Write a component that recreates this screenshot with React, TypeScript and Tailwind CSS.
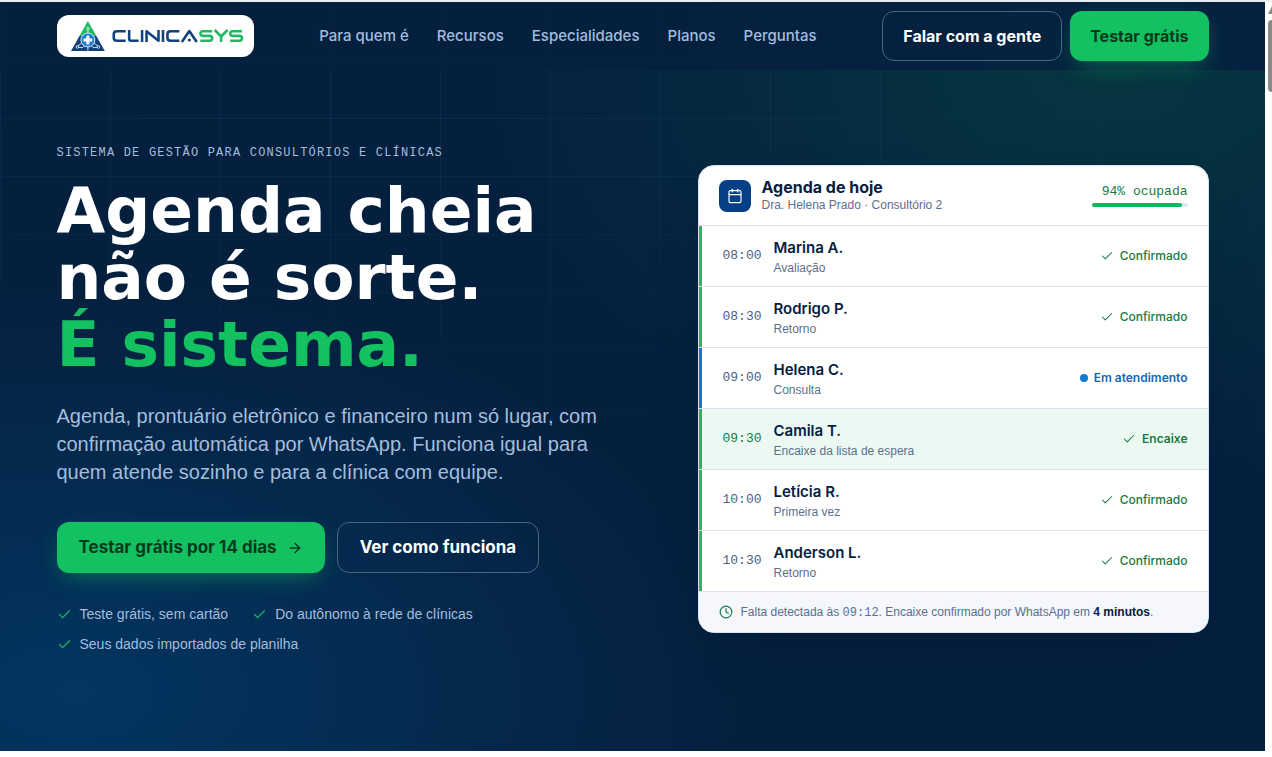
import React from 'react';
import { ArrowRight, Calendar, Check, Clock } from 'lucide-react';

const navLinks = ['Para quem é', 'Recursos', 'Especialidades', 'Planos', 'Perguntas'];

const benefits = [
  'Teste grátis, sem cartão',
  'Do autônomo à rede de clínicas',
  'Seus dados importados de planilha',
];

type Status = 'confirmado' | 'atendimento' | 'encaixe';

interface Appointment {
  time: string;
  name: string;
  kind: string;
  status: Status;
}

const appointments: Appointment[] = [
  { time: '08:00', name: 'Marina A.', kind: 'Avaliação', status: 'confirmado' },
  { time: '08:30', name: 'Rodrigo P.', kind: 'Retorno', status: 'confirmado' },
  { time: '09:00', name: 'Helena C.', kind: 'Consulta', status: 'atendimento' },
  { time: '09:30', name: 'Camila T.', kind: 'Encaixe da lista de espera', status: 'encaixe' },
  { time: '10:00', name: 'Letícia R.', kind: 'Primeira vez', status: 'confirmado' },
  { time: '10:30', name: 'Anderson L.', kind: 'Retorno', status: 'confirmado' },
];

const statusStyles: Record<
  Status,
  { label: string; text: string; bar: string; row: string; time: string }
> = {
  confirmado: {
    label: 'Confirmado',
    text: 'text-[#167a43] font-medium',
    bar: 'bg-[#22b866]',
    row: 'bg-white',
    time: 'text-[#4b6180]',
  },
  atendimento: {
    label: 'Em atendimento',
    text: 'text-[#1467b3] font-semibold',
    bar: 'bg-[#0a7bd0]',
    row: 'bg-white',
    time: 'text-[#4b6180]',
  },
  encaixe: {
    label: 'Encaixe',
    text: 'text-[#167a43] font-semibold',
    bar: 'bg-[#22b866]',
    row: 'bg-[#ecf9f2]',
    time: 'text-[#167a43]',
  },
};

function Logo() {
  return (
    <a
      href="#"
      aria-label="Clinicasys"
      className="flex h-[42px] w-[197px] shrink-0 items-center rounded-xl bg-white pl-3.5"
    >
      <svg width="173" height="30" viewBox="0 0 174 30" fill="none" aria-hidden="true">
        <path d="M17 0 25.500 15H8.500z" fill="#1fba62" />
        <path d="M8.500 15h17L34 30H0z" fill="#12427c" />
        <g stroke="#fff" strokeWidth="0.800">
          <path d="M17 9v4M17 25v5M11 22l-4 3M23 22l4 3M8 26.500h4l2-2M26 26.500h-4l-2-2" />
          <circle cx="17" cy="7.500" r="1.300" />
          <circle cx="6.500" cy="26" r="1.300" />
          <circle cx="27.500" cy="26" r="1.300" />
        </g>
        <circle cx="17" cy="19" r="7" fill="#1b7fd0" stroke="#dcebfa" strokeWidth="1" />
        <path d="M15.500 14.500h3v3h3v3h-3v3h-3v-3h-3v-3h3z" fill="#fff" />
        {/* Wordmark */}
        <g strokeWidth="2.600" strokeLinejoin="round">
          <g stroke="#12427c">
            <path d="M55 10.300H46q-3 0-3 3v3.400q0 3 3 3h9" />
            <path d="M58.500 9v8.700q0 2 2 2H68" />
            <path d="M71.500 9v12" />
            <path d="M76 21V10.300L88 19.700V9" />
            <path d="M92.500 9v12" />
            <path d="M109 10.300h-9q-3 0-3 3v3.400q0 3 3 3h9" />
            <path d="M111.500 21 119 10l7.500 11" />
          </g>
          <circle cx="119" cy="19" r="1.600" fill="#12427c" />
          <g stroke="#1fba62">
            <path d="M142 10.300h-9.500q-2.300 0-2.300 2.300t2.300 2.300h7q2.500 0 2.500 2.400t-2.500 2.400H130" />
            <path d="m144.500 9 6.500 6.500L157.500 9M151 15.500V21" />
            <path d="M172 10.300h-9.500q-2.300 0-2.300 2.300t2.300 2.300h7q2.500 0 2.500 2.400t-2.500 2.400H160" />
          </g>
        </g>
      </svg>
    </a>
  );
}

function Header() {
  return (
    <header className="relative z-10 bg-[#05203f]/90">
      <div className="mx-auto flex h-[68px] max-w-6xl items-center justify-between">
        <Logo />
        <nav className="flex gap-7 text-[15px] font-medium text-[#a3bddd]">
          {navLinks.map((link) => (
            <a key={link} href="#">
              {link}
            </a>
          ))}
        </nav>
        <div className="flex gap-2 text-base font-bold">
          <button className="h-[50px] rounded-xl border border-[#496581] px-5 text-white">
            Falar com a gente
          </button>
          <button className="h-[50px] rounded-xl bg-[#13c161] px-5 text-[#053a1c] shadow-[0_8px_24px_-8px_rgba(19,193,97,0.6)]">
            Testar grátis
          </button>
        </div>
      </div>
    </header>
  );
}

function StatusLabel({ status }: { status: Status }) {
  const style = statusStyles[status];
  return (
    <span className={`flex items-center gap-1.5 font-['Inter'] text-xs ${style.text}`}>
      {status === 'atendimento' ? (
        <span className="size-2 rounded-full bg-[#0a7bd0]" />
      ) : (
        <Check size={14} strokeWidth={1.75} />
      )}
      {style.label}
    </span>
  );
}

function AgendaCard() {
  return (
    <section className="overflow-hidden rounded-2xl border border-[#d9e3ee] bg-white font-['Liberation_Sans'] text-[#5b708c] shadow-[0_24px_60px_-20px_rgba(0,10,30,0.2)]">
      <div className="flex h-[59px] items-center gap-[11px] px-5">
        <div className="flex size-8 items-center justify-center rounded-lg bg-[#053f85] text-white">
          <Calendar size={16} strokeWidth={1.75} />
        </div>
        <div className="flex-1">
          <h2 className="font-['Inter'] text-base leading-[18px] font-bold text-[#05203f]">
            Agenda de hoje
          </h2>
          <p className="text-xs leading-[18px]">Dra. Helena Prado · Consultório 2</p>
        </div>
        <div className="flex w-24 flex-col gap-0.5 pb-0.5">
          <span className="text-right font-['Liberation_Mono'] text-[13px] leading-[18px] whitespace-nowrap text-[#167a43]">
            94% ocupada
          </span>
          <div className="h-1 rounded-full bg-[#dde6ee]">
            <div className="h-1 w-[94%] rounded-full bg-[#13b65e]" />
          </div>
        </div>
      </div>
      <ul>
        {appointments.map((item) => (
          <li
            key={item.time}
            className={`flex h-[61px] items-center border-t border-[#d9e3ee] pr-5 ${statusStyles[item.status].row}`}
          >
            <span className={`mr-[21px] w-[3px] self-stretch ${statusStyles[item.status].bar}`} />
            <time
              className={`w-[51px] font-['Liberation_Mono'] text-[13px] ${statusStyles[item.status].time}`}
            >
              {item.time}
            </time>
            <div className="flex-1 pt-1">
              <p className="font-['Inter'] text-[15px] leading-5 font-semibold text-[#05203f]">
                {item.name}
              </p>
              <p className="text-xs leading-5">{item.kind}</p>
            </div>
            <StatusLabel status={item.status} />
          </li>
        ))}
      </ul>
      <div className="flex h-[41px] items-center gap-2 border-t border-[#d9e3ee] bg-[#f5f7fc] px-5 text-xs">
        <Clock size={14} className="text-[#167a43]" />
        <p>
          Falta detectada às <span className="font-['Liberation_Mono']">09:12</span>. Encaixe
          confirmado por WhatsApp em <strong className="text-[#05203f]">4 minutos</strong>.
        </p>
      </div>
    </section>
  );
}

function Hero() {
  return (
    <main className="mx-auto grid max-w-6xl grid-cols-[1fr_511px] items-center gap-16 pt-[75px] pb-[98px]">
      <div>
        <p className="font-['Liberation_Mono'] text-xs leading-4 font-medium tracking-widest text-[#a3bddd]">
          SISTEMA DE GESTÃO PARA CONSULTÓRIOS E CLÍNICAS
        </p>
        <h1 className="mt-4 font-['DejaVu_Sans'] text-[63px] leading-[67px] font-bold text-white">
          Agenda cheia
          <br />
          não é sorte.
          <br />
          <span className="text-[#13c161]">É sistema.</span>
        </h1>
        <p className="mt-6 font-['Liberation_Sans'] text-xl leading-7 text-[#a3bddd]">
          Agenda, prontuário eletrônico e financeiro num só lugar, com confirmação automática por
          WhatsApp. Funciona igual para quem atende sozinho e para a clínica com equipe.
        </p>
        <div className="mt-9 flex gap-3 text-[17px] font-bold">
          <button className="flex h-[51px] items-center gap-2.5 rounded-xl bg-[#13c161] px-[22px] text-[#053a1c] shadow-[0_8px_24px_-8px_rgba(19,193,97,0.6)]">
            Testar grátis por 14 dias
            <ArrowRight size={16} />
          </button>
          <button className="h-[51px] rounded-xl border border-[#496581] px-[22px] text-white">
            Ver como funciona
          </button>
        </div>
        <ul className="mt-8 flex flex-wrap gap-x-6 gap-y-3 font-['Liberation_Sans'] text-sm leading-[18px] text-[#a3bddd]">
          {benefits.map((benefit) => (
            <li key={benefit} className="flex items-center gap-2">
              <Check size={15} strokeWidth={1.75} className="text-[#13c161]" />
              {benefit}
            </li>
          ))}
        </ul>
      </div>
      <AgendaCard />
    </main>
  );
}

export default function App() {
  return (
    <div className="flex items-start border-t-2 border-[#e8eef0] bg-white font-['Inter',sans-serif]">
      <div className="relative min-w-0 flex-1 bg-[#05203f] bg-[radial-gradient(620px_420px_at_88%_8%,rgba(6,85,66,0.42),transparent),radial-gradient(660px_400px_at_6%_92%,rgba(0,75,130,0.5),transparent)]">
        {/* Faint calendar grid, fading out downwards and to the right */}
        <div className="absolute inset-0 bg-[linear-gradient(to_right,rgba(150,190,230,0.07)_1px,transparent_1px),linear-gradient(to_bottom,rgba(150,190,230,0.07)_1px,transparent_1px)] bg-[size:110px_58px] [mask-image:radial-gradient(75%_62%_at_30%_0%,black_20%,transparent)]" />
        <Header />
        <div className="relative">
          <Hero />
        </div>
      </div>
      <div className="flex w-[7px] flex-col gap-1.5 overflow-hidden pt-1 pl-[3px]" aria-hidden="true">
        <div className="h-2 w-2 bg-[#8b8b8b] [clip-path:polygon(50%_0,100%_100%,0_100%)]" />
        <div className="h-[72px] w-2 rounded-full bg-[#8b8b8b]" />
      </div>
    </div>
  );
}
